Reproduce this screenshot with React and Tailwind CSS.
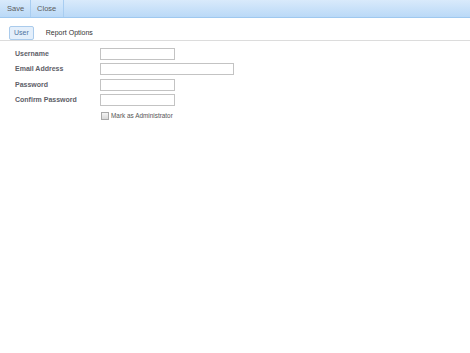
import React, { useState } from 'react';

const fields = [
    { id: 'username', label: 'Username', width: 'w-[75px]' },
    { id: 'email', label: 'Email Address', width: 'w-[134px]' },
    { id: 'password', label: 'Password', width: 'w-[75px]', type: 'password' },
    { id: 'confirm', label: 'Confirm Password', width: 'w-[75px]', type: 'password' },
];

const App = () => {
    const [tab, setTab] = useState('user');
    const [isAdmin, setIsAdmin] = useState(false);

    return (
        <div className="w-[470px] h-[353px] bg-white font-['Liberation_Sans',Arial,sans-serif] text-[7px] overflow-hidden">
            {/* toolbar */}
            <div className="flex h-[18px] bg-gradient-to-b from-[#d9eafb] to-[#bad9f7] border-b border-[#9fc8ef] text-[7.5px]">
                <button className="pl-[7px] pr-[6px] h-full text-[#5b5b5b] border-r border-[#a8cdf1]">Save</button>
                <button className="pl-[6px] pr-[7px] h-full text-[#5b5b5b] border-r border-[#a8cdf1]">Close</button>
            </div>

            {/* tabs */}
            <div className="flex items-end gap-[10px] pl-[9px] mt-[8px] border-b border-[#dcdcdc] h-[15px]">
                <button
                    onClick={() => setTab('user')}
                    className={`h-[14px] px-[4px] rounded-[2px] border ${tab === 'user' ? 'bg-[#e4effb] border-[#aacbec] text-[#4f73a0]' : 'border-transparent text-[#333]'}`}
                >
                    User
                </button>
                <button
                    onClick={() => setTab('report')}
                    className={`h-[14px] px-[1px] rounded-[2px] border ${tab === 'report' ? 'bg-[#e4effb] border-[#aacbec] text-[#4f73a0]' : 'border-transparent text-[#333]'}`}
                >
                    Report Options
                </button>
            </div>

            {/* form */}
            <div className="pl-[15px] pt-[7px]">
                <div className="flex flex-col gap-[3.4px]">
                    {fields.map((f) => (
                        <div key={f.id} className="flex items-center h-[12px]">
                            <label htmlFor={f.id} className="w-[85px] font-bold text-[#5e6068]">{f.label}</label>
                            <input
                                id={f.id}
                                type={f.type || 'text'}
                                className={`${f.width} h-[12px] border border-[#c3c3c3] bg-white outline-none`}
                            />
                        </div>
                    ))}
                </div>
                <label className="flex items-center mt-[5px] ml-[86px] text-[6.4px] text-[#555]">
                    <input
                        type="checkbox"
                        checked={isAdmin}
                        onChange={(e) => setIsAdmin(e.target.checked)}
                        className="appearance-none w-[8px] h-[8px] border border-[#a8a8a8] bg-gradient-to-b from-[#f4f4f4] to-[#d8d8d8] mr-[2px]"
                    />
                    Mark as Administrator
                </label>
            </div>
        </div>
    );
};

export default App;
